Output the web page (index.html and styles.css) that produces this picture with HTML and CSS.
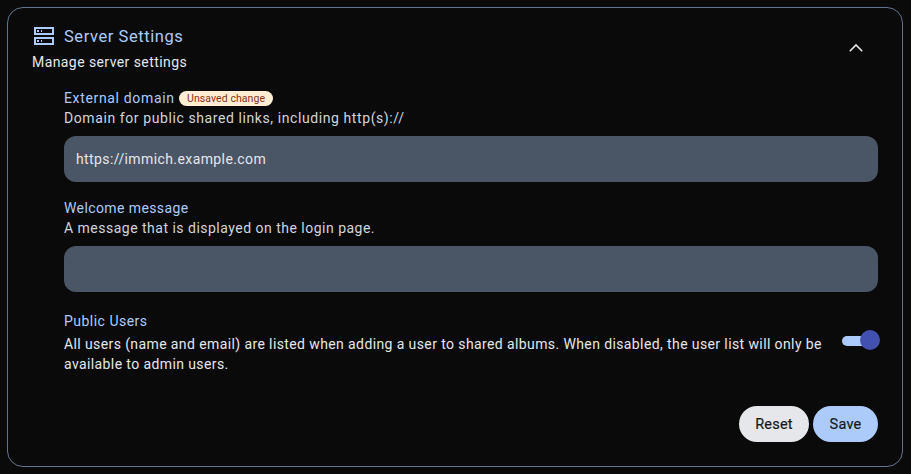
FILE: index.html
```html
<!DOCTYPE html>
<html lang="en">
<head>
<meta charset="utf-8">
<title>Server Settings</title>
<link rel="stylesheet" href="styles.css">
</head>
<body>
<section class="card">
  <header class="head">
    <div>
      <div class="title-row">
        <svg class="icon" viewBox="0 0 24 24" fill="none" shape-rendering="crispEdges">
          <path d="M3 4h18v6H3zM3 14h18v6H3z" stroke="currentColor" stroke-width="2"/>
          <path d="M5 6h2v2H5zM9 6h1v2H9zM5 16h2v2H5zM9 16h1v2H9z" fill="currentColor"/>
        </svg>
        <h2 class="title">Server Settings</h2>
      </div>
      <p class="subtitle">Manage server settings</p>
    </div>
    <button class="toggle" aria-label="Collapse">
      <svg viewBox="0 0 24 24" width="24" height="24"><path d="M5.8 15.2 12 9l6.2 6.2" fill="none" stroke="currentColor" stroke-width="1.6"/></svg>
    </button>
  </header>
  <div class="body">
    <div class="field">
      <div class="label-row"><label class="label label-domain">External domain</label><span class="badge">Unsaved change</span></div>
      <p class="desc desc-domain">Domain for public shared links, including http(s)://</p>
      <div class="input">https://immich.example.com</div>
    </div>
    <div class="field">
      <div class="label-row"><label class="label">Welcome message</label></div>
      <p class="desc desc-welcome">A message that is displayed on the login page.</p>
      <div class="input"></div>
    </div>
    <div class="switch-row">
      <div>
        <div class="label-row"><label class="label label-users">Public Users</label></div>
        <p class="desc desc-users">All users (name and email) are listed when adding a user to shared albums. When disabled, the user list will only be<br>available to admin users.</p>
      </div>
      <div class="switch"><span class="knob"></span></div>
    </div>
    <div class="actions">
      <button class="btn reset">Reset</button>
      <button class="btn save">Save</button>
    </div>
  </div>
</section>
</body>
</html>
```
FILE: styles.css
```css
* { box-sizing: border-box; margin: 0; padding: 0; }
body { background: #0a0a0a; color: #e5e7eb; font: 14px/20px Roboto, "Liberation Sans", sans-serif; }
button { border: 0; background: none; color: inherit; font: inherit; }
.card { margin: 7px 8px 7px 7px; height: 460px; border: 1px solid #62748e; border-radius: 16px; padding: 16px 24px 24px; }
.head { display: flex; justify-content: space-between; align-items: center; height: 48px; }
.title-row { display: flex; align-items: center; gap: 8px; height: 24px; color: #adcbfa; }
.icon { width: 24px; height: 24px; }
.title { padding-top: 2px; font-size: 16.5px; line-height: 24px; font-weight: 400; letter-spacing: .57px; }
.subtitle { height: 24px; line-height: 28px; letter-spacing: .42px; white-space: nowrap; }
.toggle { width: 44px; height: 48px; display: flex; align-items: center; justify-content: center; }
.toggle svg { display: block; }
.body { padding-left: 32px; padding-top: 16px; }
.field { margin-bottom: 16px; }
.label-row { display: flex; align-items: center; gap: 4.4px; height: 20px; }
.label { color: #adcbfa; letter-spacing: .4px; white-space: nowrap; }
.label-domain { letter-spacing: .66px; }
.label-users { letter-spacing: .48px; }
.badge { width: 94px; height: 15px; border-radius: 8px; background: #ffedd4; color: #8b3210; font-size: 10.5px; line-height: 15px; text-align: center; letter-spacing: .07px; white-space: nowrap; }
.desc { color: #d1d5dc; letter-spacing: .4px; white-space: nowrap; }
.desc-domain { letter-spacing: .59px; }
.desc-welcome { letter-spacing: .49px; }
.input { margin-top: 8px; height: 46px; border-radius: 12px; background: #4a5565; padding: 0 12px; line-height: 46px; letter-spacing: .4px; }
.switch-row { display: flex; justify-content: space-between; padding-top: 3px; }
.desc-users { margin-top: 3px; color: #e5e7eb; letter-spacing: .395px; }
.switch { position: relative; width: 36px; height: 10px; margin-top: 25px; border-radius: 5px; background: #adcbfa; flex: none; }
.knob { position: absolute; right: -2px; top: -6px; width: 20px; height: 20px; border-radius: 50%; background: #4250af; }
.actions { display: flex; justify-content: flex-end; gap: 4px; margin-top: 32px; }
.btn { height: 36px; padding-top: 2px; border-radius: 18px; color: #18181b; font-size: 14.5px; letter-spacing: .2px; -webkit-text-stroke: .2px #18181b; }
.reset { width: 70px; background: #e5e7eb; }
.save { width: 65px; background: #adcbfa; }
```
